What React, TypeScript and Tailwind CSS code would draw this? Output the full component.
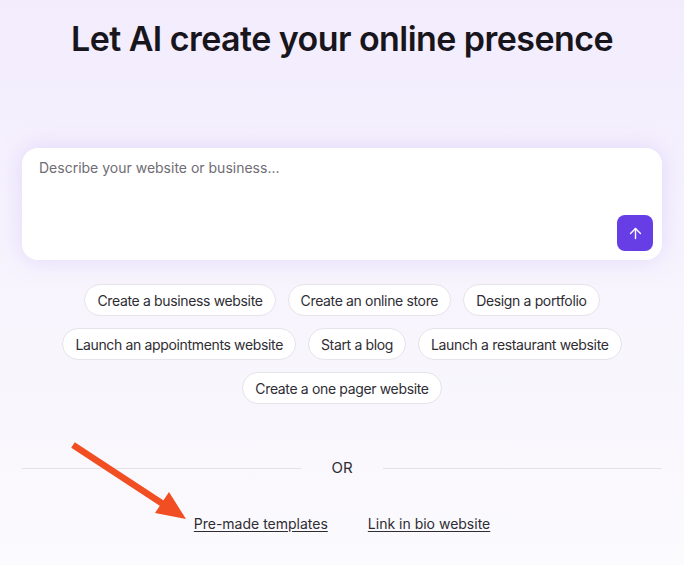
import React from 'react';
import { ArrowUp } from 'lucide-react';

const suggestions = [
  'Create a business website',
  'Create an online store',
  'Design a portfolio',
  'Launch an appointments website',
  'Start a blog',
  'Launch a restaurant website',
  'Create a one pager website',
];

export default function App() {
  return (
    <div
      className="relative w-full min-h-[565px] overflow-hidden bg-gradient-to-b from-[#f2ecfd] via-[#f7f4fd] to-[#fbfafd] text-[#2a2a2a]"
      style={{ fontFamily: 'Inter, "Noto Sans", sans-serif' }}
    >
      <div className="flex flex-col items-center px-[22px]">
        {/* Heading */}
        <h1 className="pt-[19px] text-[34px] leading-[40px] font-semibold tracking-[-0.55px] text-[#18161c]">
          Let AI create your online presence
        </h1>

        {/* Prompt box */}
        <div className="mt-[89px] w-full h-[112px] flex flex-col rounded-2xl bg-white shadow-[0_0_22px_rgba(190,170,250,0.35)]">
          <textarea
            className="flex-1 resize-none bg-transparent px-[17px] pt-[10px] text-[14px] leading-5 text-[#333] placeholder:text-[#6f6c74] outline-none"
            placeholder="Describe your website or business..."
          />
          <div className="flex justify-end pr-[9px] pb-[9px]">
            <button className="w-9 h-9 rounded-lg bg-[#673de6] flex items-center justify-center text-white">
              <ArrowUp size={17} strokeWidth={2} />
            </button>
          </div>
        </div>

        {/* Suggestions */}
        <div className="mt-[24px] w-full flex flex-wrap justify-center gap-3">
          {suggestions.map((s) => (
            <button
              key={s}
              className="h-8 px-3 rounded-full border border-[#e6e3ea] bg-white text-[14px] tracking-[-0.35px] text-[#2f2d33] whitespace-nowrap"
            >
              {s}
            </button>
          ))}
        </div>

        {/* Divider */}
        <div className="mt-[53px] w-full flex items-center gap-[30px]">
          <div className="flex-1 h-px bg-[#e4e1e9]" />
          <span className="text-[15px] text-[#2f2d33]">OR</span>
          <div className="flex-1 h-px bg-[#e4e1e9]" />
        </div>

        {/* Links */}
        <div className="mt-[33px] flex items-center gap-10 text-[14px] text-[#2f2d33]">
          <a href="#" className="underline underline-offset-2">Pre-made templates</a>
          <a href="#" className="underline underline-offset-2">Link in bio website</a>
        </div>
      </div>

      {/* Annotation arrow */}
      <svg
        className="absolute left-0 top-0 pointer-events-none"
        width="684"
        height="565"
        viewBox="0 0 684 565"
      >
        <line x1="73" y1="445" x2="163" y2="504" stroke="#f24e24" strokeWidth="6.5" strokeLinecap="butt" />
        <polygon points="186,519 155,513 169,492" fill="#f24e24" />
      </svg>
    </div>
  );
}
